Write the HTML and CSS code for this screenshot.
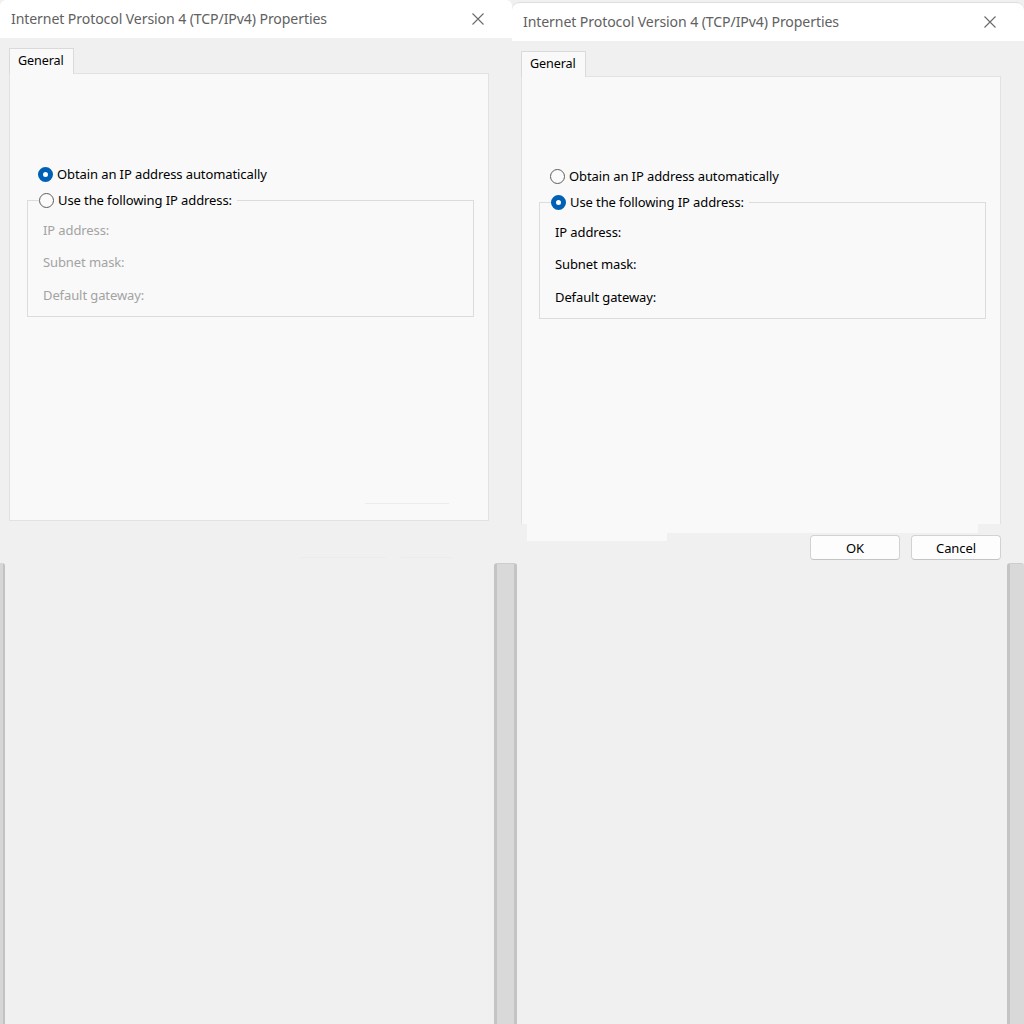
FILE: index.html
```html
<!DOCTYPE html>
<html lang="en">
<head>
<meta charset="utf-8">
<title>Internet Protocol Version 4 (TCP/IPv4) Properties</title>
<link rel="stylesheet" href="styles.css">
</head>
<body>
<div class="screen">
  <section class="dialog dialog-left">
    <header class="titlebar">
      <span class="title">Internet Protocol Version 4 (TCP/IPv4) Properties</span>
      <svg class="close" width="12" height="12" viewBox="0 0 12 12"><path d="M0.5 0.5 L11.5 11.5 M11.5 0.5 L0.5 11.5" stroke="#6a6a6a" stroke-width="1.1" fill="none"/></svg>
    </header>
    <div class="body">
      <div class="tabs"><div class="tab">General</div></div>
      <div class="panel">
        <label class="radio-row">
          <span class="radio checked"></span>
          <span class="radio-text">Obtain an IP address automatically</span>
        </label>
        <fieldset class="group">
          <legend class="legend">
            <span class="radio"></span>
            <span class="radio-text">Use the following IP address:</span>
          </legend>
          <div class="fields disabled">
            <div class="field">IP address:</div>
            <div class="field">Subnet mask:</div>
            <div class="field">Default gateway:</div>
          </div>
        </fieldset>
        <div class="ghost-line ghost-inner"></div>
      </div>
      <div class="ghost-row">
        <div class="ghost-line ghost-a"></div>
        <div class="ghost-line ghost-b"></div>
      </div>
    </div>
  </section>

  <section class="dialog dialog-right">
    <header class="titlebar">
      <span class="title">Internet Protocol Version 4 (TCP/IPv4) Properties</span>
      <svg class="close" width="12" height="12" viewBox="0 0 12 12"><path d="M0.5 0.5 L11.5 11.5 M11.5 0.5 L0.5 11.5" stroke="#6a6a6a" stroke-width="1.1" fill="none"/></svg>
    </header>
    <div class="body">
      <div class="tabs"><div class="tab">General</div></div>
      <div class="panel panel-open">
        <label class="radio-row">
          <span class="radio"></span>
          <span class="radio-text">Obtain an IP address automatically</span>
        </label>
        <fieldset class="group">
          <legend class="legend">
            <span class="radio checked"></span>
            <span class="radio-text">Use the following IP address:</span>
          </legend>
          <div class="fields">
            <div class="field">IP address:</div>
            <div class="field">Subnet mask:</div>
            <div class="field">Default gateway:</div>
          </div>
        </fieldset>
      </div>
      <div class="patch-strip">
        <div class="patch patch-tall"></div>
        <div class="patch patch-short"></div>
      </div>
      <div class="buttons">
        <button class="btn">OK</button>
        <button class="btn">Cancel</button>
      </div>
    </div>
  </section>

  <div class="backdrop">
    <div class="edge-left"></div>
    <div class="gap"></div>
    <div class="bar bar-mid"></div>
    <div class="gap"></div>
    <div class="bar bar-right"></div>
  </div>
</div>
</body>
</html>
```

FILE: styles.css
```css
* { box-sizing: border-box; }

html, body {
  margin: 0;
  padding: 0;
  width: 1024px;
  height: 1024px;
  overflow: hidden;
  background: #f0f0f0;
  font-family: "Noto Sans", "Open Sans", sans-serif;
}

.screen {
  display: grid;
  grid-template-columns: 512px 512px;
  grid-template-rows: 563px 1fr;
  width: 1024px;
  height: 1024px;
}

.dialog {
  background: #f0f0f0;
  display: flex;
  flex-direction: column;
  overflow: hidden;
}

.dialog-left {
  height: 562px;
  border-radius: 6px 6px 6px 6px;
}

.dialog-right {
  margin-top: 2px;
  height: 561px;
  border-top: 1px solid #dedede;
  border-radius: 8px 8px 0 0;
}

.titlebar {
  height: 38px;
  background: #ffffff;
  display: flex;
  align-items: center;
  justify-content: space-between;
  padding: 0 28px 1px 11px;
  flex: none;
}

.title {
  font-size: 14.1px;
  color: #616161;
  letter-spacing: -0.1px;
  white-space: nowrap;
}

.close { display: block; }

.body {
  display: flex;
  flex-direction: column;
  padding: 10px 0 0 9px;
  flex: 1;
}

.tabs {
  display: flex;
  height: 25px;
  position: relative;
  z-index: 1;
}

.tab {
  width: 65px;
  height: 26px;
  background: #f9f9f9;
  border: 1px solid #dadada;
  border-bottom: none;
  font-size: 12.6px;
  color: #000;
  padding: 3px 0 0 8px;
  letter-spacing: -0.1px;
}

.panel {
  width: 480px;
  height: 448px;
  background: #f9f9f9;
  border: 1px solid #e2e2e2;
  padding: 92px 0 0 17px;
  display: flex;
  flex-direction: column;
  flex: none;
}

.panel-open {
  height: 448px;
  border-bottom: none;
  padding-top: 91px;
}

.radio-row {
  display: flex;
  align-items: center;
  height: 16px;
  margin-left: 11px;
  margin-bottom: 10px;
}

.radio {
  width: 15px;
  height: 15px;
  border-radius: 50%;
  border: 1px solid #5e5e5e;
  background: #fbfbfb;
  flex: none;
  margin-right: 4px;
}

.radio.checked {
  border: 5px solid #0060b6;
  background: #ffffff;
}

.radio-text {
  font-size: 13px;
  color: #000;
  letter-spacing: -0.1px;
  white-space: nowrap;
  line-height: 16px;
}

.group {
  width: 447px;
  margin: 0;
  padding: 0 0 13px 15px;
  border: 1px solid #dcdcdc;
  min-width: 0;
}

.legend {
  display: flex;
  align-items: center;
  height: 16px;
  padding: 0 5px 0 0;
  margin-left: -4px;
}

.fields {
  display: flex;
  flex-direction: column;
  gap: 16.5px;
  padding-top: 13.5px;
}

.field {
  font-size: 13px;
  line-height: 16px;
  color: #000;
  letter-spacing: -0.1px;
}

.fields.disabled .field { color: #a3a3a3; }

.ghost-line {
  height: 1px;
  background: #ececec;
}

.ghost-inner {
  width: 84px;
  margin: 186px 0 0 338px;
}

.ghost-row {
  display: flex;
  gap: 15px;
  padding-left: 291px;
  margin-top: 36px;
}

.ghost-a { width: 86px; }
.ghost-b { width: 52px; }

.patch-strip {
  display: flex;
  align-items: flex-start;
  height: 9px;
  padding-left: 6px;
}

.patch { background: #f9f9f9; flex: none; }
.patch-tall { width: 140px; height: 17px; }
.patch-short { width: 311px; height: 9px; }

.buttons {
  display: flex;
  justify-content: flex-end;
  gap: 11px;
  padding-right: 23px;
  margin-top: 2px;
  position: relative;
}

.btn {
  width: 90px;
  height: 25px;
  background: #fdfdfd;
  border: 1px solid #d2d2d2;
  border-bottom-color: #c4c4c4;
  border-radius: 4px;
  font-family: "Noto Sans", "Open Sans", sans-serif;
  font-size: 13px;
  color: #000;
  padding: 0;
  letter-spacing: -0.1px;
}

.backdrop {
  grid-column: 1 / 3;
  display: grid;
  grid-template-columns: 5px 489px 23px 490px 17px;
  background: #f0f0f0;
}

.edge-left {
  background: linear-gradient(to right, #d6d6d6 0, #d6d6d6 3px, #c2c2c2 3px, #c2c2c2 5px);
  border-radius: 0 3px 0 0;
}

.bar {
  background: #d9d9d9;
  border-radius: 3px 3px 0 0;
}

.bar-mid {
  border-left: 3px solid #c4c4c4;
  border-right: 3px solid #c4c4c4;
  border-top: 1px solid #cdcdcd;
}

.bar-right {
  border-left: 3px solid #c4c4c4;
  border-top: 1px solid #cdcdcd;
}
```
